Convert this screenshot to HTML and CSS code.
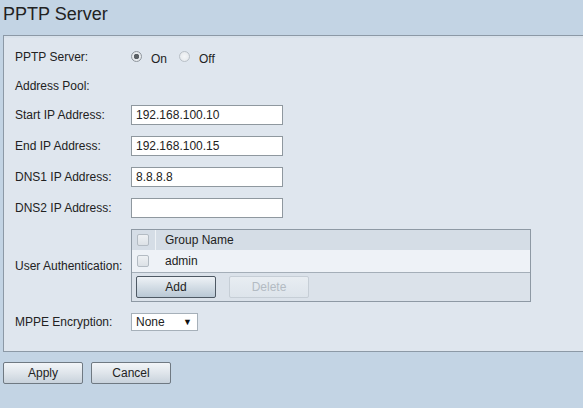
FILE: index.html
```html
<!DOCTYPE html>
<html>
<head>
<meta charset="utf-8">
<link rel="stylesheet" href="styles.css">
</head>
<body>
<h1 class="title">PPTP Server</h1>
<div class="panel">
  <div class="row r1">
    <span class="label">PPTP Server:</span>
    <span class="radio checked"></span><span class="rtext">On</span>
    <span class="radio"></span><span class="rtext">Off</span>
  </div>
  <div class="row r2"><span class="label">Address Pool:</span></div>
  <div class="row">
    <span class="label">Start IP Address:</span>
    <span class="input">192.168.100.10</span>
  </div>
  <div class="row">
    <span class="label">End IP Address:</span>
    <span class="input">192.168.100.15</span>
  </div>
  <div class="row">
    <span class="label">DNS1 IP Address:</span>
    <span class="input">8.8.8.8</span>
  </div>
  <div class="row">
    <span class="label">DNS2 IP Address:</span>
    <span class="input"></span>
  </div>
  <div class="row">
    <span class="label">User Authentication:</span>
    <div class="table">
      <div class="thead">
        <div class="cbcell"><span class="cb"></span></div>
        <div class="namecell">Group Name</div>
      </div>
      <div class="trow">
        <div class="cbcell"><span class="cb"></span></div>
        <div class="namecell">admin</div>
      </div>
      <div class="tfoot">
        <span class="btn add">Add</span>
        <span class="btn disabled">Delete</span>
      </div>
    </div>
  </div>
  <div class="row r-last">
    <span class="label">MPPE Encryption:</span>
    <span class="select"><span>None</span><span class="arrow">&#9660;</span></span>
  </div>
</div>
<div class="actions">
  <span class="btn main">Apply</span>
  <span class="btn main">Cancel</span>
</div>
</body>
</html>
```

FILE: styles.css
```css
html, body {
  margin: 0;
  padding: 0;
  background: #c3d4e4;
  overflow: hidden;
  font-family: "Liberation Sans", Arial, sans-serif;
  color: #222;
}
body {
  width: 583px;
  height: 408px;
}
.title {
  margin: 0;
  padding: 3px 0 10px 3px;
  font-size: 18px;
  line-height: 22px;
  font-weight: normal;
  color: #222;
}
.panel {
  margin-left: 3px;
  margin-right: -10px;
  background: #dfe6ee;
  border: 1px solid #8c99a6;
  box-shadow: inset 0 2px 0 #d9e2eb;
  padding: 12px 0 20px 11px;
  display: flex;
  flex-direction: column;
  gap: 11px;
  font-size: 12px;
}
.row {
  display: flex;
  align-items: center;
  min-height: 20px;
}
.r1 { min-height: 18px; height: 18px; }
.r2 { min-height: 17px; height: 17px; }
.r-last { min-height: 18px; height: 18px; }
.label {
  width: 116px;
  flex: none;
}
.radio {
  width: 11px;
  height: 11px;
  border-radius: 50%;
  border: 1px solid #b9c0c7;
  background: radial-gradient(circle, #f4f6f8 0%, #e2e6ea 100%);
  box-sizing: border-box;
  position: relative;
  margin-right: 9px;
  margin-top: -2px;
}
.radio.checked {
  border-color: #8f969d;
  background: radial-gradient(circle, #5c6166 0, #5c6166 2.5px, #e9ecef 3px, #dfe3e7 100%);
}
.rtext {
  margin-right: 12px;
  margin-top: 3px;
}
.input {
  width: 152px;
  height: 20px;
  box-sizing: border-box;
  border: 1px solid #8f989f;
  background: #fff;
  padding-left: 4px;
  line-height: 18px;
  font-size: 12px;
}
.table {
  width: 400px;
  box-sizing: border-box;
  border: 1px solid #8e99a4;
  display: flex;
  flex-direction: column;
}
.thead, .trow {
  display: flex;
  align-items: stretch;
}
.thead {
  height: 20px;
  background: #d5dde6;
}
.trow {
  height: 22px;
  background: #eef2f7;
  border-bottom: 1px solid #a4aeb8;
}
.cbcell {
  width: 24px;
  display: flex;
  align-items: center;
  padding-left: 5px;
  box-sizing: border-box;
}
.thead .cbcell {
  border-right: 1px solid #eef2f6;
}
.namecell {
  display: flex;
  align-items: center;
  padding-left: 9px;
}
.cb {
  width: 12px;
  height: 12px;
  box-sizing: border-box;
  border: 1px solid #b3bbc3;
  border-radius: 2px;
  background: linear-gradient(#eef1f4, #dce1e6);
}
.tfoot {
  height: 28px;
  background: #dbe2ea;
  display: flex;
  align-items: center;
  padding-left: 4px;
  gap: 13px;
}
.btn {
  width: 80px;
  height: 22px;
  box-sizing: border-box;
  display: flex;
  align-items: center;
  justify-content: center;
  font-size: 12px;
  border-radius: 2px;
}
.btn.add {
  border: 1px solid #4e5964;
  background: linear-gradient(#eef2f6 0%, #d6dfe7 45%, #b9c8d5 100%);
  color: #222;
}
.btn.disabled {
  border: 1px solid #c6ced6;
  background: linear-gradient(#e8edf2, #dde4eb);
  color: #b3bbc3;
}
.select {
  width: 67px;
  height: 18px;
  box-sizing: border-box;
  border: 1px solid #a6b0b9;
  background: #fff;
  display: flex;
  align-items: center;
  justify-content: space-between;
  padding: 0 5px 0 4px;
  font-size: 12px;
}
.arrow {
  font-size: 9px;
  color: #111;
}
.actions {
  display: flex;
  gap: 8px;
  margin: 10px 0 0 3px;
}
.btn.main {
  border: 1px solid #6f7982;
  background: linear-gradient(#f2f5f8 0%, #dfe5eb 50%, #c8d2dc 100%);
  color: #222;
}
```
